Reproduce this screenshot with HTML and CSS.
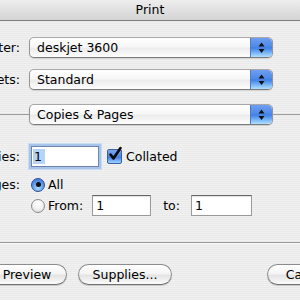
FILE: index.html
```html
<!DOCTYPE html>
<html lang="en">
<head>
    <meta charset="UTF-8">
    <title>Print</title>
    <link rel="stylesheet" href="styles.css">
</head>
<body>

    <div class="window">
        <div class="titlebar">Print</div>

        <div class="content">
            <div class="form-row">
                <div class="label">Printer:</div>
                <div class="popup">
                    <span class="popup-text">deskjet 3600</span>
                    <span class="stepper">
                        <svg width="21" height="19" viewBox="0 0 21 19"><path d="M10.5 4.5 L13.5 8.5 L7.5 8.5 Z M7.5 11 L13.5 11 L10.5 15 Z" fill="#111"/></svg>
                    </span>
                </div>
            </div>

            <div class="form-row presets">
                <div class="label">Presets:</div>
                <div class="popup">
                    <span class="popup-text">Standard</span>
                    <span class="stepper">
                        <svg width="21" height="19" viewBox="0 0 21 19"><path d="M10.5 4.5 L13.5 8.5 L7.5 8.5 Z M7.5 11 L13.5 11 L10.5 15 Z" fill="#111"/></svg>
                    </span>
                </div>
            </div>

            <div class="panel-row">
                <span class="rule"></span>
                <div class="popup">
                    <span class="popup-text">Copies &amp; Pages</span>
                    <span class="stepper">
                        <svg width="21" height="19" viewBox="0 0 21 19"><path d="M10.5 4.5 L13.5 8.5 L7.5 8.5 Z M7.5 11 L13.5 11 L10.5 15 Z" fill="#111"/></svg>
                    </span>
                </div>
                <span class="rule"></span>
            </div>

            <div class="panel">
                <div class="form-row">
                    <div class="label">Copies:</div>
                    <div class="controls">
                        <div class="field field-focus"><span class="selected-text">1</span></div>
                        <span class="checkbox">
                            <svg width="17" height="17" viewBox="0 0 17 17"><path d="M3.5 8.5 L6.5 12.5 L13.5 2" fill="none" stroke="#0a0a0a" stroke-width="2.6" stroke-linecap="round" stroke-linejoin="round"/></svg>
                        </span>
                        <span class="check-label">Collated</span>
                    </div>
                </div>

                <div class="form-row pages">
                    <div class="label">Pages:</div>
                    <div class="controls">
                        <span class="radio radio-on"><span class="dot"></span></span>
                        <span class="radio-label">All</span>
                    </div>
                </div>

                <div class="form-row range">
                    <div class="label"></div>
                    <div class="controls">
                        <span class="radio"></span>
                        <span class="radio-label">From:</span>
                        <div class="field field-from">1</div>
                        <span class="to-label">to:</span>
                        <div class="field field-to">1</div>
                    </div>
                </div>
            </div>

            <div class="footer">
                <button class="btn btn-preview">Preview</button>
                <button class="btn btn-supplies">Supplies...</button>
                <button class="btn btn-cancel">Cancel</button>
            </div>
        </div>
    </div>

</body>
</html>
```

FILE: styles.css
```css
html {
    overflow: hidden;
}
body {
    margin: 0;
    width: 300px;
    height: 300px;
    overflow: hidden;
    font-family: "DejaVu Sans", "Liberation Sans", sans-serif;
    font-size: 12.5px;
    color: #000;
    background: repeating-linear-gradient(to bottom, #f1f1f1 0, #f1f1f1 1px, #e9e9e9 1px, #e9e9e9 2px);
}
.titlebar {
    height: 20px;
    line-height: 20px;
    text-align: center;
    background: linear-gradient(to bottom, #ededed, #d4d4d4);
    border-bottom: 1px solid #7f7f7f;
}
.content {
    padding-top: 16px;
}
.form-row {
    display: grid;
    grid-template-columns: 20px 244px;
    column-gap: 9px;
    align-items: center;
}
.label {
    display: flex;
    justify-content: flex-end;
    white-space: nowrap;
}
.presets {
    margin-top: 11px;
}
.popup {
    height: 21px;
    box-sizing: border-box;
    display: flex;
    align-items: center;
    border: 1px solid #949494;
    border-top-color: #a8a8a8;
    border-bottom-color: #7a7a7a;
    border-radius: 5px;
    background: linear-gradient(to bottom, #ffffff 0%, #f7f7f7 45%, #ececec 55%, #fdfdfd 100%);
    box-shadow: 0 1px 1px rgba(0, 0, 0, 0.12);
    overflow: hidden;
}
.popup-text {
    padding-left: 7px;
    flex: 1;
    white-space: nowrap;
}
.stepper {
    width: 21px;
    height: 19px;
    border-left: 1px solid #4f79c4;
    background: linear-gradient(to bottom, #6e9ef0 0%, #4f8ae8 45%, #3f7fe6 52%, #87c3fb 85%, #b4e0ff 100%);
    border-radius: 0 4px 4px 0;
    display: flex;
}
.panel-row {
    margin-top: 14px;
    display: grid;
    grid-template-columns: 29px 244px 1fr;
    align-items: center;
}
.rule {
    height: 1px;
    background-color: #9c9c9c;
}
.panel {
    height: 118px;
    padding-top: 21px;
    box-sizing: border-box;
    border-bottom: 1px solid #9a9a9a;
}
.controls {
    display: flex;
    align-items: center;
    white-space: nowrap;
}
.field {
    height: 21px;
    box-sizing: border-box;
    display: flex;
    align-items: center;
    padding: 0 3px;
    background-color: #fff;
    border: 1px solid #9a9a9a;
    border-top-color: #666;
    box-shadow: inset 0 1px 1px rgba(0, 0, 0, 0.12);
}
.field-focus {
    width: 68px;
    margin-left: 2px;
    padding-left: 1px;
    box-shadow: 0 0 0 2px #a7c5ea, 0 0 0 3px #c9dbf2;
    border-color: #6d84a8;
}
.selected-text {
    background-color: #b5d3f7;
    padding: 0 3px 0 1px;
    line-height: 15px;
}
.checkbox {
    width: 15px;
    height: 15px;
    box-sizing: border-box;
    margin-left: 8px;
    border: 1px solid #3b5ea8;
    border-radius: 2px;
    background: linear-gradient(to bottom, #7fa9ee 0%, #4c86e6 50%, #3f7de4 55%, #9fd4ff 100%);
    position: relative;
}
.checkbox svg {
    position: absolute;
    left: -1px;
    top: -4px;
}
.check-label {
    margin-left: 4px;
}
.pages {
    margin-top: 10px;
}
.radio {
    width: 14px;
    height: 14px;
    box-sizing: border-box;
    margin-left: 2px;
    border-radius: 50%;
    border: 1px solid #8c8c8c;
    background: radial-gradient(circle at 50% 30%, #ffffff 0%, #f1f1f1 50%, #d6d6d6 100%);
    display: flex;
    align-items: center;
    justify-content: center;
}
.radio-on {
    border-color: #2d4f9a;
    background: radial-gradient(circle at 50% 75%, #a9dcff 0%, #5a94ea 55%, #3a6fd6 100%);
}
.dot {
    width: 5px;
    height: 5px;
    border-radius: 50%;
    background-color: #111;
}
.radio-label {
    margin-left: 3px;
}
.range {
    margin-top: 3px;
}
.field-from {
    width: 59px;
    margin-left: 9px;
}
.to-label {
    margin-left: 12px;
}
.field-to {
    width: 61px;
    margin-left: 11px;
}
.footer {
    border-top: 1px solid #f8f8f8;
    padding-top: 20px;
    margin-left: -13px;
    display: flex;
}
.btn {
    flex-shrink: 0;
    height: 21px;
    box-sizing: border-box;
    padding: 0;
    font-family: inherit;
    font-size: 12.5px;
    color: #000;
    border: 1px solid #8c8c8c;
    border-bottom-color: #6f6f6f;
    border-radius: 11px;
    background: linear-gradient(to bottom, #ffffff 0%, #f4f4f4 45%, #e4e4e4 55%, #fbfbfb 100%);
    box-shadow: 0 1px 1px rgba(0, 0, 0, 0.15);
}
.btn-preview {
    width: 80px;
}
.btn-supplies {
    width: 94px;
    margin-left: 11px;
}
.btn-cancel {
    width: 80px;
    margin-left: 95px;
}
```
